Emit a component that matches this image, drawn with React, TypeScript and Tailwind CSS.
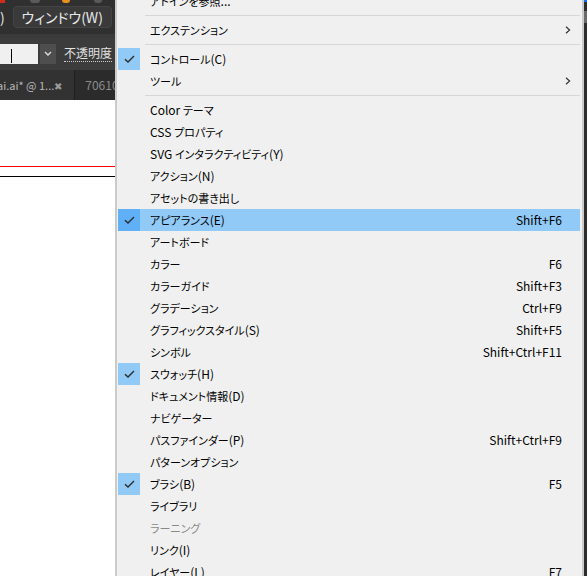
type Item =
  | { sep: true }
  | {
      sep?: false;
      label: string;
      shortcut?: string;
      checked?: boolean;
      sub?: boolean;
      active?: boolean;
      disabled?: boolean;
    };

const items: Item[] = [
  { label: 'アドインを参照...' },
  { sep: true },
  { label: 'エクステンション', sub: true },
  { sep: true },
  { label: 'コントロール(C)', checked: true },
  { label: 'ツール', sub: true },
  { sep: true },
  { label: 'Color テーマ' },
  { label: 'CSS プロパティ' },
  { label: 'SVG インタラクティビティ(Y)' },
  { label: 'アクション(N)' },
  { label: 'アセットの書き出し' },
  { label: 'アピアランス(E)', checked: true, active: true, shortcut: 'Shift+F6' },
  { label: 'アートボード' },
  { label: 'カラー', shortcut: 'F6' },
  { label: 'カラーガイド', shortcut: 'Shift+F3' },
  { label: 'グラデーション', shortcut: 'Ctrl+F9' },
  { label: 'グラフィックスタイル(S)', shortcut: 'Shift+F5' },
  { label: 'シンボル', shortcut: 'Shift+Ctrl+F11' },
  { label: 'スウォッチ(H)', checked: true },
  { label: 'ドキュメント情報(D)' },
  { label: 'ナビゲーター' },
  { label: 'パスファインダー(P)', shortcut: 'Shift+Ctrl+F9' },
  { label: 'パターンオプション' },
  { label: 'ブラシ(B)', checked: true, shortcut: 'F5' },
  { label: 'ライブラリ' },
  { label: 'ラーニング', disabled: true },
  { label: 'リンク(I)' },
  { label: 'レイヤー(L)', shortcut: 'F7' },
];

// kana in the reference font runs narrower than Noto CJK, so Japanese runs get a smaller size
function Label({ text }: { text: string }) {
  const runs = text.match(/[\x00-\x7f]+|[^\x00-\x7f]+/g) ?? [];
  return (
    <>
      {runs.map((r, i) =>
        /^[\x00-\x7f]/.test(r) ? (
          <span key={i}>{r}</span>
        ) : (
          <span key={i} className="text-[11px]">
            {r}
          </span>
        )
      )}
    </>
  );
}

function CheckMark() {
  return (
    <svg width="11" height="8" viewBox="0 0 11 8" fill="none">
      <path d="M1 4.2 L4 7 L10 1" stroke="#2b2b2b" strokeWidth="1.4" />
    </svg>
  );
}

function Chevron() {
  return (
    <svg width="6" height="8" viewBox="0 0 6 8" fill="none">
      <path d="M1 0.8 L4.6 4 L1 7.2" stroke="#333" strokeWidth="1.2" />
    </svg>
  );
}

function MenuRow({ item }: { item: Exclude<Item, { sep: true }> }) {
  return (
    <div className={`flex h-[22px] items-center ${item.active ? 'bg-[#91c9f7]' : ''}`}>
      <div
        className={`flex h-[22px] w-[22px] shrink-0 items-center justify-center ${
          item.checked ? (item.active ? 'bg-[#5fb0f6]' : 'bg-[#91c9f7]') : ''
        }`}
      >
        {item.checked && <CheckMark />}
      </div>
      <span
        className={`ml-[10px] flex-1 whitespace-nowrap ${item.disabled ? 'text-[#8a8a8a]' : 'text-black'}`}
      >
        <Label text={item.label} />
      </span>
      {item.shortcut && <span className="mr-[18px] whitespace-nowrap text-black">{item.shortcut}</span>}
      {item.sub && (
        <span className="mr-[9px] flex items-center">
          <Chevron />
        </span>
      )}
    </div>
  );
}

export default function App() {
  return (
    <div className="flex h-[576px] w-[587px] overflow-hidden bg-white [font-family:'Noto_Sans_CJK_JP',sans-serif] [font-feature-settings:'palt']">
      {/* app behind the menu */}
      <div className="flex w-[115px] shrink-0 flex-col">
        <div className="relative h-[34px] bg-[#303030]">
          <div className="absolute left-0 top-0 h-[3px] w-[5px] bg-[#d42a1c]" />
          <div className="absolute left-[30px] top-0 h-[3px] w-[10px] rounded-b-full bg-[#5a5a5a]" />
          <div className="absolute left-[62px] top-0 h-[3px] w-[8px] rounded-b-full bg-[#e8901e]" />
          <div className="absolute left-[94px] top-0 h-[3px] w-[8px] rounded-b-full bg-[#5a5a5a]" />
          <div className="flex h-full items-center">
            <span className="text-[14px] leading-none text-[#e4e4e4]">)</span>
            <div className="ml-[8px] flex h-[22px] w-[99px] items-center justify-center rounded-[4px] border border-[#444] bg-[#3a3a3a] text-[14px] text-[#e8e8e8]">
              ウィンドウ(W)
            </div>
          </div>
        </div>
        <div className="h-[3px] bg-[#3a3a3a]" />
        <div className="flex h-[33px] items-center bg-[#3c3c3c]">
          <div className="relative h-[20px] w-[38px] bg-[#f0f0f0]">
            <div className="absolute left-[11px] top-[5px] h-[14px] w-px bg-black" />
          </div>
          <div className="ml-[2px] flex h-[20px] w-[16px] items-center justify-center bg-[#4e4e4e]">
            <svg width="8" height="5" viewBox="0 0 8 5" fill="none">
              <path d="M1 1 L4 4 L7 1" stroke="#e0e0e0" strokeWidth="1.3" />
            </svg>
          </div>
          <span className="ml-[8px] whitespace-nowrap border-b border-dotted border-[#cfcfcf] text-[12px] leading-[16px] text-[#e2e2e2]">
            不透明度
          </span>
        </div>
        <div className="flex h-[30px] items-center bg-[#2b2b2b]">
          <div className="flex h-full w-[78px] items-center border-r border-[#1f1f1f] bg-[#323232]">
            <span className="-ml-[3px] whitespace-nowrap text-[11px] text-[#b8b8b8]">ai.ai* @ 1...</span>
            <span className="ml-auto mr-[12px] text-[10px] text-[#9a9a9a]">✖</span>
          </div>
          <span className="ml-[10px] whitespace-nowrap text-[12px] text-[#8c8c8c]">70610</span>
        </div>
        <div className="flex-1 bg-white pt-[66px]">
          <div className="h-px bg-[#ff0000]" />
          <div className="mt-[9px] h-px bg-black" />
        </div>
      </div>

      {/* window menu */}
      <div className="flex flex-1 flex-col border-x-2 border-[#cbcbcb] bg-[#f0f0f0] pl-px pr-[2px] text-[12px]">
        <div className="-mt-[10px]">
          {items.map((item, i) =>
            item.sep ? (
              <div key={i} className="py-[3px]">
                <div className="ml-[27px] h-px bg-[#d7d7d7]" />
              </div>
            ) : (
              <MenuRow key={i} item={item} />
            )
          )}
        </div>
      </div>

      <div className="w-[3px] shrink-0 bg-[#2d2d2d]">
        <div className="h-[2px] bg-[#1473e6]" />
        <div className="mt-[9px] h-[12px] bg-[#6a6a6a]" />
      </div>
    </div>
  );
}
